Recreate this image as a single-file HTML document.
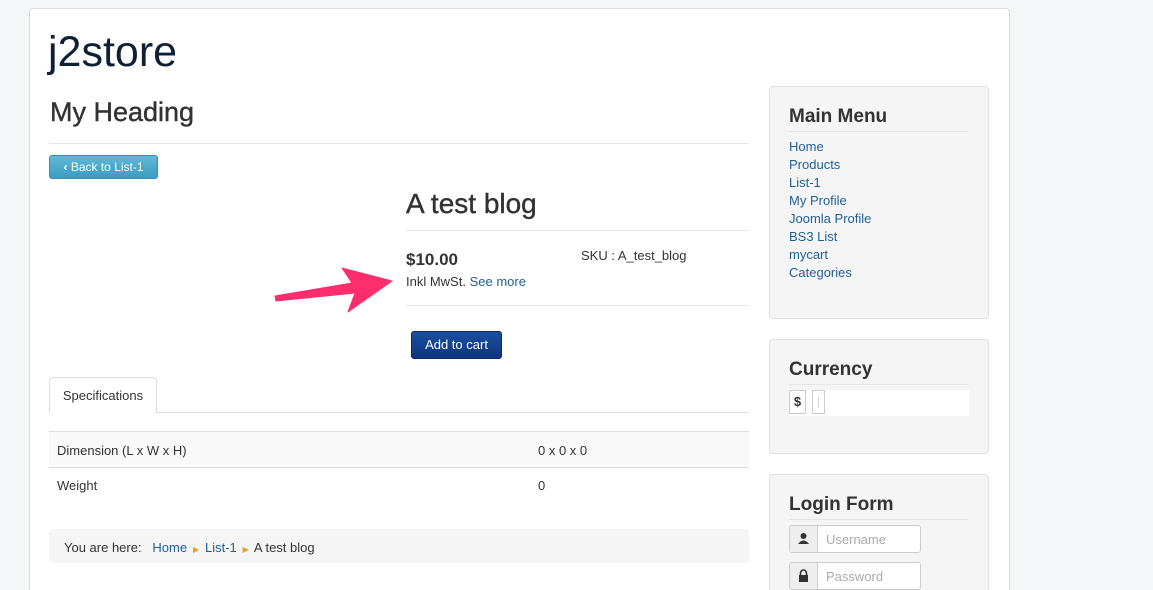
<!DOCTYPE html>
<html style="height:590px;overflow:hidden"><head><style>
body{margin:0;background:#f4f6f7;font-family:"Liberation Sans",sans-serif;font-size:13px;color:#333;width:1153px;height:590px;overflow:hidden;position:relative}
.c{position:absolute;left:29px;top:8px;width:979px;height:600px;background:#fff;border:1px solid #dcdcdc;border-radius:4px}
.a{position:absolute;white-space:nowrap}
a{color:#1f5f98;text-decoration:none}
.hr{position:absolute;height:1px;background:#e5e5e5}
.well{position:absolute;left:769px;width:218px;background:#f5f5f5;border:1px solid #e1e1e1;border-radius:4px}
.well h3{margin:0;position:absolute;left:19px;font-size:19px;font-weight:bold;color:#333}
.inp{position:absolute;left:789px;width:130px;height:26px;border:1px solid #ccc;border-radius:3px;background:#fff}
.inp .ic{position:absolute;left:0;top:0;width:27px;height:26px;background:#eee;border-right:1px solid #ccc}
.inp span{position:absolute;left:36px;top:6px;color:#aaa;font-size:13px}
</style></head><body>
<div class="c"></div>
<div class="a" style="left:48px;top:28px;font-size:43px;color:#0f2035">j2store</div>
<div class="a" style="left:50px;top:97px;font-size:27px;color:#333;-webkit-text-stroke:0.4px #333">My Heading</div>
<div class="hr" style="left:49px;top:143px;width:700px"></div>
<div class="a" style="left:49px;top:155px;width:107px;height:22px;background:linear-gradient(#5fb8d8,#3c9cc2);border:1px solid #3a8fb0;border-radius:3px;color:#fff;font-size:12px;line-height:22px;text-align:center"><b>‹</b> Back to List-1</div>
<div class="a" style="left:406px;top:188px;font-size:28px;color:#333;-webkit-text-stroke:0.4px #333">A test blog</div>
<div class="hr" style="left:406px;top:230px;width:343px"></div>
<div class="a" style="left:406px;top:250px;font-size:17px;font-weight:bold">$10.00</div>
<div class="a" style="left:406px;top:274px">Inkl MwSt. <a>See more</a></div>
<div class="a" style="left:581px;top:248px">SKU : A_test_blog</div>
<div class="hr" style="left:406px;top:305px;width:343px"></div>
<svg class="a" style="left:0;top:0" width="400" height="320"><path d="M275 296 L352 283 L342 268 L392 281 L348 312 L355 293 L276 301 Z" fill="#fe2d6e" stroke="#fe2d6e" stroke-width="1" stroke-linejoin="round"/></svg>
<div class="a" style="left:411px;top:331px;width:89px;height:26px;background:linear-gradient(#1a4fa0,#0f357d);border:1px solid #0b2a66;border-radius:3px;color:#fff;line-height:26px;text-align:center">Add to cart</div>
<div class="a" style="left:49px;top:377px;width:106px;height:35px;border:1px solid #ddd;border-bottom:1px solid #fff;border-radius:4px 4px 0 0;background:#fff;text-align:center;line-height:36px;z-index:2">Specifications</div>
<div class="hr" style="left:49px;top:412px;width:700px;background:#ddd"></div>
<div class="a" style="left:49px;top:431px;width:700px;height:35px;background:#f9f9f9;border-top:1px solid #ddd;border-bottom:1px solid #ddd"></div>
<div class="a" style="left:57px;top:443px">Dimension (L x W x H)</div>
<div class="a" style="left:538px;top:443px">0 x 0 x 0</div>
<div class="a" style="left:57px;top:478px">Weight</div>
<div class="a" style="left:538px;top:478px">0</div>
<div class="a" style="left:49px;top:529px;width:700px;height:34px;background:#f5f5f5;border-radius:4px"></div>
<div class="a" style="left:64px;top:540px">You are here: &nbsp;&nbsp;<a>Home</a> <span style="color:#e89a2c;font-size:8px">&nbsp;▶&nbsp;</span> <a>List-1</a> <span style="color:#e89a2c;font-size:8px">&nbsp;▶&nbsp;</span> A test blog</div>

<div class="well" style="top:86px;height:231px"><h3 style="top:19px">Main Menu</h3></div>
<div class="hr" style="left:789px;top:131px;width:179px"></div>
<div class="a" style="left:789px;top:138px;line-height:18px"><a>Home</a><br><a>Products</a><br><a>List-1</a><br><a>My Profile</a><br><a>Joomla Profile</a><br><a>BS3 List</a><br><a>mycart</a><br><a>Categories</a></div>

<div class="well" style="top:339px;height:113px"><h3 style="top:19px">Currency</h3></div>
<div class="hr" style="left:789px;top:384px;width:179px"></div>
<div class="a" style="left:789px;top:390px;width:180px;height:26px;background:#fff"></div>
<div class="a" style="left:789px;top:390px;width:15px;height:22px;border:1px solid #ccc;font-weight:bold;text-align:center;line-height:22px">$</div>
<div class="a" style="left:812px;top:390px;width:11px;height:22px;border:1px solid #ccc;color:#ccc;text-align:center;line-height:22px;font-size:11px">|</div>

<div class="well" style="top:474px;height:140px"><h3 style="top:19px">Login Form</h3></div>
<div class="hr" style="left:789px;top:519px;width:179px"></div>
<div class="inp" style="top:525px"><div class="ic"><svg width="27" height="26"><circle cx="13.5" cy="10" r="3" fill="#333"/><path d="M8 18 Q13.5 11 19 18 Z" fill="#333"/></svg></div><span>Username</span></div>
<div class="inp" style="top:562px"><div class="ic"><svg width="27" height="26"><path d="M10.5 12 V10 a3 3 0 0 1 6 0 V12" stroke="#333" stroke-width="1.6" fill="none"/><rect x="9" y="12" width="9" height="7" fill="#333"/></svg></div><span>Password</span></div>
</body></html>
